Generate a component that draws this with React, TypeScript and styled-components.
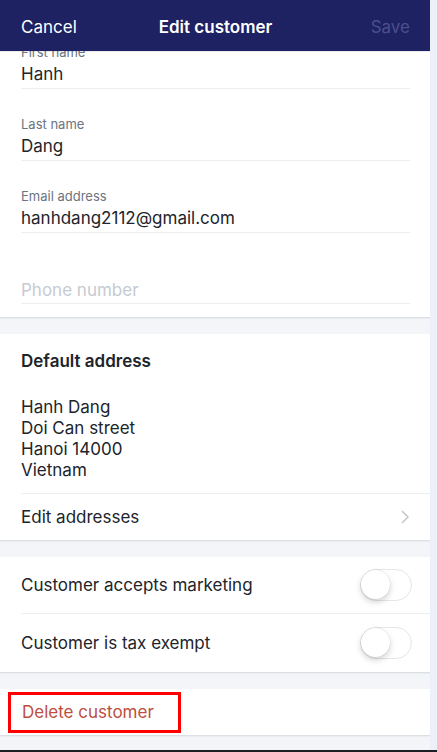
import React from "react";
import styled, { createGlobalStyle } from "styled-components";

const Global = createGlobalStyle`
  html, body { margin: 0; padding: 0; background: #ecf1f9; }
  body { font-family: Inter, "Noto Sans", "Liberation Sans", sans-serif; -webkit-font-smoothing: antialiased; }
  * { box-sizing: border-box; }
`;

const Screen = styled.div`
  width: 430px;
  height: 750px;
  background: #f4f5f8;
  display: flex;
  flex-direction: column;
  overflow: hidden;
`;

const Frame = styled.div`
  width: 437px;
  height: 752px;
  display: flex;
  flex-direction: column;
  border-bottom: 2px solid #1e1e22;
`;

const NavBar = styled.header`
  height: 51px;
  flex: 0 0 51px;
  background: #1e2162;
  display: grid;
  grid-template-columns: 1fr auto 1fr;
  align-items: center;
  padding: 0 20px 0 21px;
  position: relative;
  z-index: 2;
  box-shadow: 0 1px 0 rgba(0, 0, 0, 0.08);
`;

const NavButton = styled.span<{ $muted?: boolean; $right?: boolean }>`
  font-size: 17px;
  color: ${(p) => (p.$muted ? "#4b508c" : "#ffffff")};
  justify-self: ${(p) => (p.$right ? "end" : "start")};
  margin-top: 3px;
`;

const NavTitle = styled.span`
  font-size: 17px;
  font-weight: 600;
  color: #ffffff;
  margin-top: 3px;
`;

const ScrollView = styled.div`
  flex: 1;
  overflow: hidden;
`;

const ScrollContent = styled.div`
  display: flex;
  flex-direction: column;
  gap: 17px;
  transform: translateY(-34px);
`;

const Card = styled.section<{ $padBottom?: number }>`
  background: #ffffff;
  box-shadow: 0 1px 0 #dcdfe4, 0 2px 1px rgba(0, 0, 0, 0.03);
  padding-bottom: ${(p) => p.$padBottom ?? 0}px;
  display: flex;
  flex-direction: column;
`;

const Field = styled.div<{ $height?: number }>`
  margin: 0 20px 0 21px;
  height: ${(p) => p.$height ?? 72}px;
  border-bottom: 1px solid #eceef1;
  display: flex;
  flex-direction: column;
  padding-top: 27px;
`;

const FieldLabel = styled.span`
  font-size: 13px;
  line-height: 16px;
  height: 16px;
  color: #6b7480;
`;

const FieldValue = styled.span<{ $placeholder?: boolean }>`
  font-size: 17px;
  line-height: 22px;
  margin-top: 3px;
  color: ${(p) => (p.$placeholder ? "#c6cbd2" : "#20242b")};
`;

const CardTitle = styled.h2`
  margin: 0;
  padding: 17px 21px 0;
  font-size: 17px;
  line-height: 20px;
  font-weight: 600;
  color: #20242b;
`;

const AddressBlock = styled.div`
  padding: 26px 21px 12px;
  display: flex;
  flex-direction: column;
  font-size: 17px;
  line-height: 21px;
  color: #20242b;
`;

const Row = styled.div<{ $height: number; $divider?: boolean }>`
  height: ${(p) => p.$height}px;
  margin-left: 21px;
  padding-right: 18px;
  display: flex;
  align-items: center;
  justify-content: space-between;
  border-top: ${(p) => (p.$divider ? "1px solid #eceef1" : "0")};
  font-size: 17px;
  color: #20242b;
`;

const Chevron = styled.svg`
  width: 9px;
  height: 14px;
  margin-right: 2px;
`;

const Switch = styled.span`
  width: 52px;
  height: 32px;
  border-radius: 16px;
  border: 1.5px solid #e6e6ea;
  background: #ffffff;
  position: relative;
  display: inline-block;
`;

const Knob = styled.span`
  position: absolute;
  top: 0;
  left: 0;
  width: 29px;
  height: 29px;
  border-radius: 50%;
  background: #ffffff;
  box-shadow: 0 3px 6px rgba(0, 0, 0, 0.18), 0 0 0 0.5px rgba(0, 0, 0, 0.08);
`;

const DeleteRow = styled.div`
  height: 46px;
  display: flex;
  align-items: center;
  padding-left: 8px;
`;

const Highlight = styled.span`
  width: 173px;
  height: 41px;
  border: 3px solid #ff0000;
  display: flex;
  align-items: center;
  padding-left: 11px;
  font-size: 17px;
  color: #bd4f40;
`;

export default function App() {
  return (
    <>
      <Global />
      <Frame>
        <Screen>
          <NavBar>
            <NavButton>Cancel</NavButton>
            <NavTitle>Edit customer</NavTitle>
            <NavButton $muted $right>
              Save
            </NavButton>
          </NavBar>
          <ScrollView>
            <ScrollContent>
              <Card $padBottom={13}>
                <Field>
                  <FieldLabel>First name</FieldLabel>
                  <FieldValue>Hanh</FieldValue>
                </Field>
                <Field>
                  <FieldLabel>Last name</FieldLabel>
                  <FieldValue>Dang</FieldValue>
                </Field>
                <Field>
                  <FieldLabel>Email address</FieldLabel>
                  <FieldValue>hanhdang2112@gmail.com</FieldValue>
                </Field>
                <Field $height={71}>
                  <FieldLabel />
                  <FieldValue $placeholder>Phone number</FieldValue>
                </Field>
              </Card>

              <Card>
                <CardTitle>Default address</CardTitle>
                <AddressBlock>
                  <span>Hanh Dang</span>
                  <span>Doi Can street</span>
                  <span>Hanoi 14000</span>
                  <span>Vietnam</span>
                </AddressBlock>
                <Row $height={47} $divider>
                  <span>Edit addresses</span>
                  <Chevron viewBox="0 0 9 14">
                    <path d="M1.5 1.5 L7 7 L1.5 12.5" fill="none" stroke="#c4c7cc" strokeWidth="1.6" strokeLinecap="round" strokeLinejoin="round" />
                  </Chevron>
                </Row>
              </Card>

              <Card>
                <Row $height={56}>
                  <span>Customer accepts marketing</span>
                  <Switch>
                    <Knob />
                  </Switch>
                </Row>
                <Row $height={59} $divider>
                  <span>Customer is tax exempt</span>
                  <Switch>
                    <Knob />
                  </Switch>
                </Row>
              </Card>

              <Card>
                <DeleteRow>
                  <Highlight>Delete customer</Highlight>
                </DeleteRow>
              </Card>
            </ScrollContent>
          </ScrollView>
        </Screen>
      </Frame>
    </>
  );
}
